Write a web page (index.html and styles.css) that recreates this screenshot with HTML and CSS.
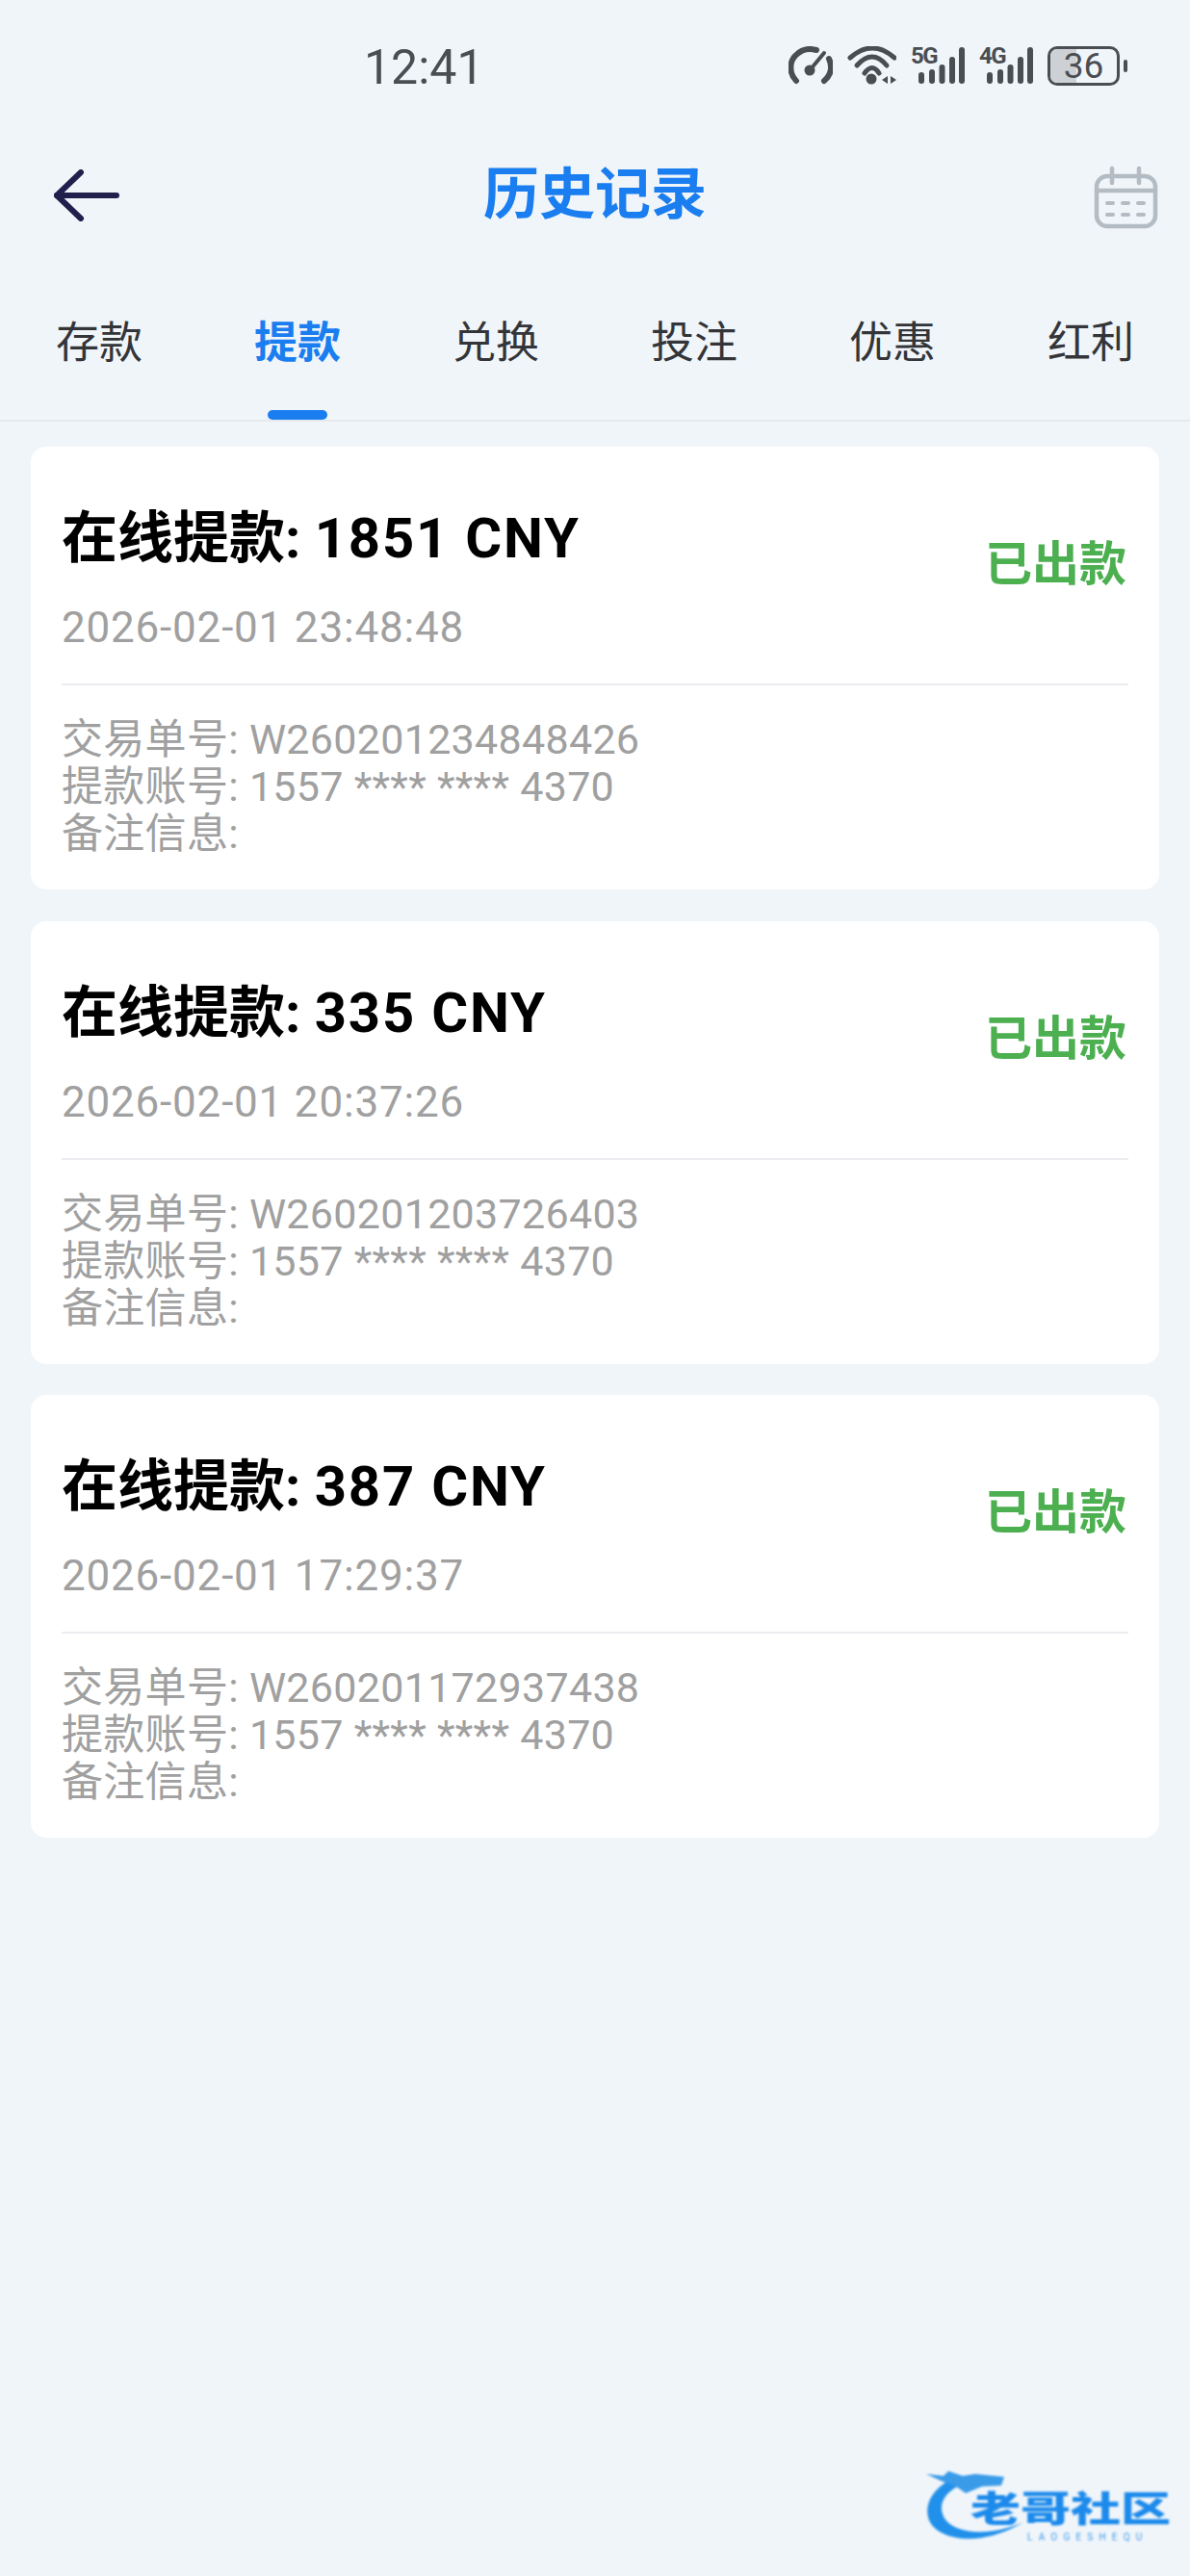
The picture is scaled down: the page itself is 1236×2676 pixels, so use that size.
FILE: index.html
```html
<!DOCTYPE html>
<html lang="zh-CN">
<head>
<meta charset="utf-8">
<title>历史记录</title>
<link rel="stylesheet" href="styles.css">
</head>
<body>
<div class="page">
  <div class="status">
    <span class="time">12:41</span>
    <div class="status-icons">
      <svg class="ic" width="46" height="40" viewBox="0 0 46 40" fill="none" stroke="#4a4d52" stroke-linecap="round">
        <path d="M8 36 C0 28 1 15 8 9 C14 3 22 2 29 4" stroke-width="6"/>
        <path d="M42 13 C46 22 44 30 37 36" stroke-width="6"/>
        <path d="M22 25 L37 7" stroke-width="4"/>
        <circle cx="22" cy="25" r="5.5" fill="#4a4d52" stroke="none"/>
      </svg>
      <svg class="ic" width="51" height="40" viewBox="0 0 51 40" fill="none" stroke="#4a4d52" stroke-linecap="round" stroke-width="5">
        <path d="M3 12 Q26 -8 49 12"/>
        <path d="M10 20 Q26 2 41 20"/>
        <path d="M18 28 Q26 17 33 28"/>
        <circle cx="25" cy="34" r="5.5" fill="#4a4d52" stroke="none"/>
        <path d="M42 31 L42 39 L36 35 Z M45 31 L45 39 L51 35 Z" fill="#4a4d52" stroke="none"/>
      </svg>
      <div class="net">
        <span class="net-label">5G</span>
        <svg class="ic" width="56" height="40" viewBox="0 0 56 40" fill="#4a4d52">
          <rect x="8" y="27" width="6" height="12" rx="3"/>
          <rect x="19" y="24" width="6" height="15" rx="3"/>
          <rect x="29.5" y="19" width="6" height="20" rx="3"/>
          <rect x="40" y="11" width="6" height="28" rx="3"/>
          <rect x="50" y="1" width="6" height="38" rx="3"/>
        </svg>
      </div>
      <div class="net">
        <span class="net-label">4G</span>
        <svg class="ic" width="56" height="40" viewBox="0 0 56 40" fill="#4a4d52">
          <rect x="8" y="27" width="6" height="12" rx="3"/>
          <rect x="19" y="24" width="6" height="15" rx="3"/>
          <rect x="29.5" y="19" width="6" height="20" rx="3"/>
          <rect x="40" y="11" width="6" height="28" rx="3"/>
          <rect x="50" y="1" width="6" height="38" rx="3"/>
        </svg>
      </div>
      <div class="battery">
        <div class="battery-body"><span class="battery-fill"></span><span class="battery-num">36</span></div>
        <span class="battery-tip"></span>
      </div>
    </div>
  </div>

  <header class="nav">
    <svg class="back" width="68" height="54" viewBox="0 0 68 54" fill="none" stroke="#221f4d" stroke-width="6" stroke-linecap="round" stroke-linejoin="round">
      <path d="M3 27 H65"/>
      <path d="M28 3 L3 27 L28 51"/>
    </svg>
    <h1 class="title">历史记录</h1>
    <svg class="calendar" width="70" height="68" viewBox="0 0 70 68" fill="none" stroke="#b3bcc2" stroke-width="4.5" stroke-linecap="round">
      <rect x="5" y="12" width="61" height="52" rx="11"/>
      <path d="M5 27 H66"/>
      <path d="M21 4 V19 M49 4 V19"/>
      <path d="M16 40 H22 M32 40 H38 M48 40 H54 M16 52 H22 M32 52 H38 M48 52 H54" stroke-width="4"/>
    </svg>
  </header>

  <nav class="tabs">
    <span class="tab">存款</span>
    <span class="tab tab-active">提款</span>
    <span class="tab">兑换</span>
    <span class="tab">投注</span>
    <span class="tab">优惠</span>
    <span class="tab">红利</span>
  </nav>

  <main class="list">
    <article class="card">
      <div class="card-top">
        <div class="card-head">
          <div class="card-title">在线提款: <span class="amount">1851 CNY</span></div>
          <div class="card-date">2026-02-01 23:48:48</div>
        </div>
        <div class="card-state">已出款</div>
      </div>
      <div class="card-info">
        <div>交易单号: W260201234848426</div>
        <div>提款账号: 1557 **** **** 4370</div>
        <div>备注信息:</div>
      </div>
    </article>
    <article class="card">
      <div class="card-top">
        <div class="card-head">
          <div class="card-title">在线提款: <span class="amount">335 CNY</span></div>
          <div class="card-date">2026-02-01 20:37:26</div>
        </div>
        <div class="card-state">已出款</div>
      </div>
      <div class="card-info">
        <div>交易单号: W260201203726403</div>
        <div>提款账号: 1557 **** **** 4370</div>
        <div>备注信息:</div>
      </div>
    </article>
    <article class="card">
      <div class="card-top">
        <div class="card-head">
          <div class="card-title">在线提款: <span class="amount">387 CNY</span></div>
          <div class="card-date">2026-02-01 17:29:37</div>
        </div>
        <div class="card-state">已出款</div>
      </div>
      <div class="card-info">
        <div>交易单号: W260201172937438</div>
        <div>提款账号: 1557 **** **** 4370</div>
        <div>备注信息:</div>
      </div>
    </article>
  </main>

  <div class="logo">
    <svg class="logo-mark" width="120" height="90" viewBox="0 0 120 90">
      <path d="M36 14 C14 24 4 42 10 58 C18 78 62 88 108 60 C72 76 36 72 26 56 C18 42 26 28 46 20 Z" fill="#2190ea"/>
      <path d="M7 10 L25 12 L30 7 L45 12 L58 10 L88 13 L85 22 L65 23 L48 30 L38 23 L22 17 Z" fill="#3a9be8"/>
    </svg>
    <span class="logo-cn">老哥社区</span>
    <span class="logo-en">LAOGESHEQU</span>
  </div>
</div>
</body>
</html>
```

FILE: styles.css
```css
* { box-sizing: border-box; }
html, body { margin: 0; padding: 0; }
body {
  background: #f0f5fa;
  font-family: Roboto, "Noto Sans CJK SC", sans-serif;
}
.page {
  position: relative;
  width: 1236px;
  height: 2676px;
  overflow: hidden;
  background: #f0f5fa;
}
.status {
  height: 136px;
  display: flex;
  align-items: center;
  justify-content: space-between;
  padding: 0 65px 0 378px;
}
.time {
  font-size: 50px;
  color: #4a4d52;
  padding-top: 3px;
}
.status-icons {
  display: flex;
  align-items: center;
  gap: 15px;
}
.ic { display: block; }
.net { position: relative; }
.net-label {
  position: absolute;
  left: 0;
  top: -1px;
  font-size: 24px;
  font-weight: 700;
  line-height: 22px;
  color: #4a4d52;
  letter-spacing: -1.5px;
}
.battery { display: flex; align-items: center; gap: 4px; }
.battery-body {
  position: relative;
  width: 75px;
  height: 41px;
  border: 3px solid #4a4d52;
  border-radius: 10px;
  overflow: hidden;
  display: flex;
  align-items: center;
  justify-content: center;
}
.battery-fill {
  position: absolute;
  left: 0; top: 0; bottom: 0;
  width: 27px;
  background: #cdd0d5;
}
.battery-num {
  position: relative;
  font-size: 37px;
  line-height: 35px;
  color: #4a4d52;
}
.battery-tip {
  width: 4px;
  height: 13px;
  border-radius: 2px;
  background: #4a4d52;
}
.nav {
  height: 132px;
  display: grid;
  grid-template-columns: 1fr auto 1fr;
  align-items: center;
  padding: 0 32px;
}
.back { margin: 2px 0 0 24px; }
.title {
  margin: 0;
  font-size: 58px;
  font-weight: 700;
  color: #1a7ef0;
  line-height: 1;
}
.calendar { justify-self: end; margin-top: 6px; }
.tabs {
  height: 170px;
  display: grid;
  grid-template-columns: repeat(6, 1fr);
  grid-template-rows: 168px;
  border-bottom: 2px solid #e6eaee;
}
.tab {
  position: relative;
  text-align: center;
  font-size: 45px;
  line-height: 178px;
  color: #333538;
}
.tab-active { color: #1a7ef0; font-weight: 700; }
.tab-active::after {
  content: "";
  position: absolute;
  left: 72px;
  bottom: 0;
  width: 62px;
  height: 10px;
  border-radius: 5px;
  background: #1a7ef0;
}
.list {
  padding: 26px 32px 0;
  display: flex;
  flex-direction: column;
  gap: 32.5px;
}
.card {
  height: 460px;
  background: #fff;
  border-radius: 16px;
  padding: 0 32px;
}
.card-top {
  height: 248px;
  display: flex;
  align-items: center;
  justify-content: space-between;
  border-bottom: 2px solid #ebedf0;
  padding: 0 2px 11px 0;
}
.card-head { align-self: flex-start; padding-top: 55px; }
.card-title {
  font-size: 58px;
  font-weight: 700;
  color: #000;
  line-height: 80px;
}
.amount { letter-spacing: 1.8px; }
.card-date {
  margin-top: 28px;
  font-size: 44px;
  letter-spacing: 0.8px;
  color: #a0a0a0;
  line-height: 50px;
}
.card-state {
  font-size: 49px;
  font-weight: 700;
  color: #4caf50;
}
.card-info {
  padding-top: 32px;
  font-size: 43px;
  letter-spacing: 0.3px;
  color: #a0a0a0;
  line-height: 49px;
}
.logo {
  position: absolute;
  left: 955px;
  top: 2560px;
  width: 270px;
  height: 110px;
  filter: blur(0.8px);
}
.logo-mark { position: absolute; left: 0; top: 0; }
.logo-cn {
  position: absolute;
  left: 53px;
  top: 18px;
  font-size: 52px;
  font-weight: 900;
  line-height: 60px;
  color: #1c8aeb;
  white-space: nowrap;
  transform: scaleY(0.72);
}
.logo-en {
  position: absolute;
  left: 112px;
  top: 70px;
  font-size: 10px;
  letter-spacing: 6.2px;
  line-height: 12px;
  color: #3f9bea;
  white-space: nowrap;
}
```
